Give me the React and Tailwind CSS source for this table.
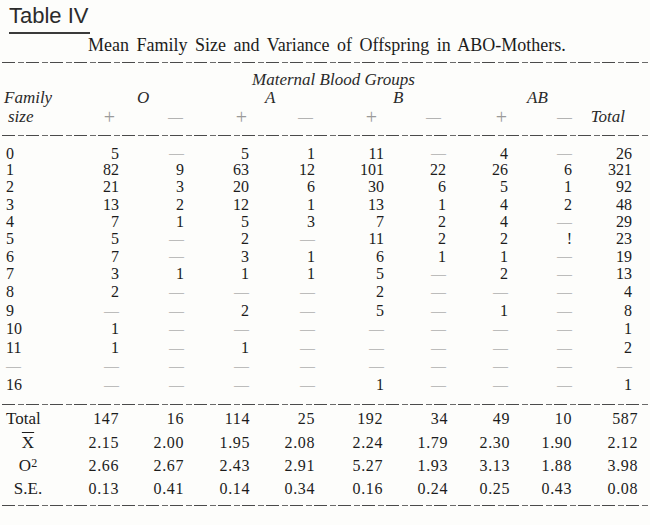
const dataRows = [
  ['0', '5', '—', '5', '1', '11', '—', '4', '—', '26'],
  ['1', '82', '9', '63', '12', '101', '22', '26', '6', '321'],
  ['2', '21', '3', '20', '6', '30', '6', '5', '1', '92'],
  ['3', '13', '2', '12', '1', '13', '1', '4', '2', '48'],
  ['4', '7', '1', '5', '3', '7', '2', '4', '—', '29'],
  ['5', '5', '—', '2', '—', '11', '2', '2', '!', '23'],
  ['6', '7', '—', '3', '1', '6', '1', '1', '—', '19'],
  ['7', '3', '1', '1', '1', '5', '—', '2', '—', '13'],
  ['8', '2', '—', '—', '—', '2', '—', '—', '—', '4'],
  ['9', '—', '—', '2', '—', '5', '—', '1', '—', '8'],
  ['10', '1', '—', '—', '—', '—', '—', '—', '—', '1'],
  ['11', '1', '—', '1', '—', '—', '—', '—', '—', '2'],
  ['—', '—', '—', '—', '—', '—', '—', '—', '—', '—'],
  ['16', '—', '—', '—', '—', '1', '—', '—', '—', '1'],
];

const summary = [
  ['Total', '147', '16', '114', '25', '192', '34', '49', '10', '587'],
  ['X', '2.15', '2.00', '1.95', '2.08', '2.24', '1.79', '2.30', '1.90', '2.12'],
  ['O', '2.66', '2.67', '2.43', '2.91', '5.27', '1.93', '3.13', '1.88', '3.98'],
  ['S.E.', '0.13', '0.41', '0.14', '0.34', '0.16', '0.24', '0.25', '0.43', '0.08'],
];

const signs = [
  { s: '+', pr: 'pr-[4px]' },
  { s: '—', pr: 'pr-[1px]' },
  { s: '+', pr: 'pr-[2px]' },
  { s: '—', pr: 'pr-[2px]' },
  { s: '+', pr: 'pr-[7px]' },
  { s: '—', pr: 'pr-[5px]' },
  { s: '+', pr: 'pr-[1px]' },
  { s: '—', pr: 'pr-0' },
];

const gridCols = 'grid grid-cols-[60px_59px_65px_65px_66px_69px_62px_62px_64px_60px]';

function Rule() {
  return (
    <div className="mx-[2px] h-px bg-[repeating-linear-gradient(90deg,#4a4a4a_0_13px,transparent_13px_16px,#6a6a6a_16px_22px,transparent_22px_24px)]" />
  );
}

function Cell({ v }) {
  if (v === '—') {
    return <span className="text-[15px] text-[#8a8a8a]">—</span>;
  }
  return <span>{v}</span>;
}

function Label({ v }) {
  if (v === 'X') return <span className="overline">X</span>;
  if (v === 'O') return <span>O<span className="relative -top-[4px] text-[12px]">2</span></span>;
  return <span>{v}</span>;
}

export default function App() {
  return (
    <div
      className="w-[650px] h-[525px] overflow-hidden bg-[#fdfdfb] text-[#1c1c1c]"
      style={{ fontFamily: "'Liberation Serif', 'Times New Roman', serif" }}
    >
      <div className="h-[32px] pt-[4px] pl-[9px] text-[22px] leading-[24px] text-[#2b2b2b]" style={{ fontFamily: "'Liberation Sans', Arial, sans-serif" }}>
        Table IV
      </div>
      <div className="ml-[9px] w-[81px] h-[2px] bg-[#3a3a3a]" />
      <div className="mt-[1px] pl-[88px] text-[18px] leading-[20px] [word-spacing:3px]">
        Mean Family Size and Variance of Offspring in ABO-Mothers.
      </div>

      <div className="mt-[7px]"><Rule /></div>

      <div className="mt-[9px] h-[16px] pl-[252px] italic text-[17px] leading-[16px] text-[#2a2a2a]">
        Maternal Blood Groups
      </div>
      <div className={`${gridCols} h-[18px] pt-[2px] italic text-[17px] leading-[16px] text-[#2a2a2a]`}>
        <div className="pl-[4px]">Family</div>
        <div className="col-span-2 pl-[77px]">O</div>
        <div className="col-span-2 pl-[81px]">A</div>
        <div className="col-span-2 pl-[78px]">B</div>
        <div className="col-span-2 pl-[81px]">AB</div>
        <div />
      </div>
      <div className={`${gridCols} h-[22px] items-center leading-[22px]`}>
        <div className="pl-[8px] italic text-[17px] text-[#2a2a2a]">size</div>
        {signs.map((x, i) => (
          <div key={i} className={`text-right ${x.pr} ${x.s === '+' ? 'text-[20px] font-light text-[#9a9a9a]' : 'text-[15px] text-[#7a7a7a]'}`}>
            {x.s}
          </div>
        ))}
        <div className="pr-[7px] text-right italic text-[17px] text-[#2a2a2a]">Total</div>
      </div>

      <div className="mt-[7px]"><Rule /></div>

      <div className="pt-[8px] text-[16px]">
        {dataRows.map((r, i) => (
          <div key={i} className={`${gridCols} items-center ${i < 7 ? 'h-[17.2px] leading-[17px]' : 'h-[18.5px] leading-[18px]'}`}>
            <div className="pl-[6px] text-left"><Cell v={r[0]} /></div>
            {r.slice(1).map((v, j) => (
              <div key={j} className="text-right"><Cell v={v} /></div>
            ))}
          </div>
        ))}
      </div>

      <div className="mt-[10px]"><Rule /></div>

      <div className="pt-[3px] text-[16px]">
        {summary.map((r, i) => (
          <div key={i} className="grid grid-cols-[60px_59px_65px_66px_65px_68px_65px_62px_62px_66px] h-[23.3px] items-center leading-[20px]">
            <div className={i === 0 ? 'pl-[6px] text-[17px]' : 'text-center pr-[4px] text-[17px]'}><Label v={r[0]} /></div>
            {r.slice(1).map((v, j) => (
              <div key={j} className="text-right tracking-[0.6px]">{v}</div>
            ))}
          </div>
        ))}
      </div>

      <div className="mt-[4px]"><Rule /></div>
    </div>
  );
}
